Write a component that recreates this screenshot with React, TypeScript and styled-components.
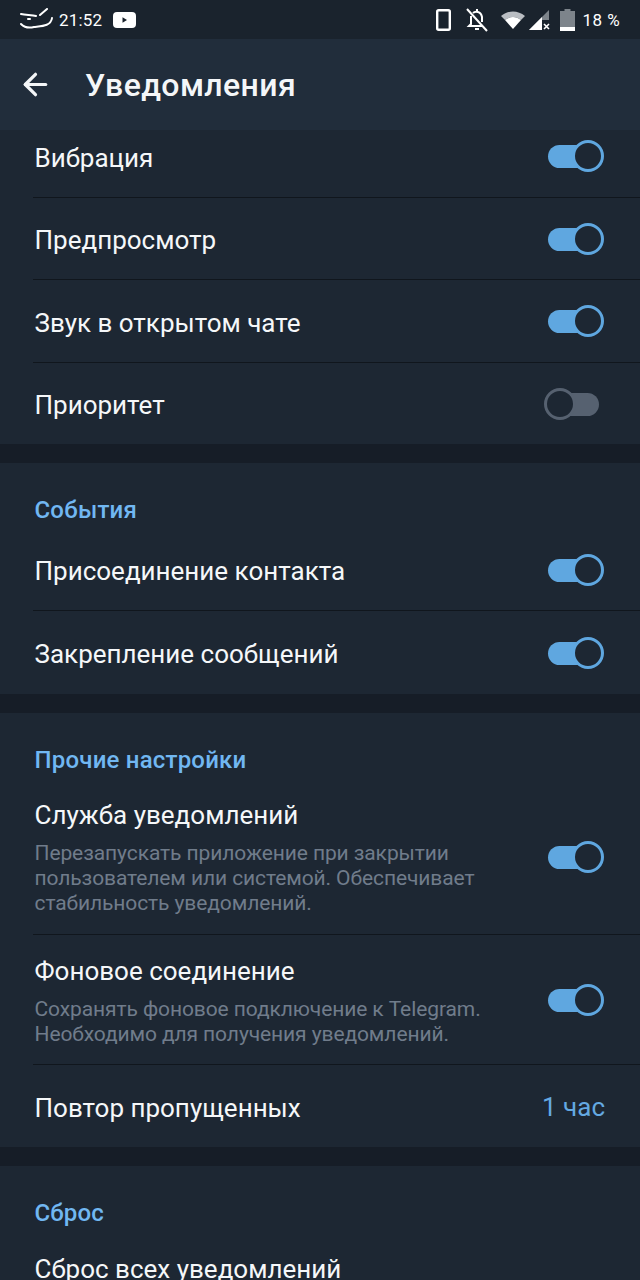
import React from 'react';
import styled, { createGlobalStyle } from 'styled-components';
import { ArrowLeft } from 'lucide-react';

const GlobalStyle = createGlobalStyle`
  html, body {
    margin: 0;
    padding: 0;
    background: #161d27;
    font-family: Roboto, "Noto Sans", sans-serif;
  }
`;

const Screen = styled.div`
  width: 640px;
  height: 1280px;
  overflow: hidden;
  background: #161d27;
  color: #ffffff;
`;

const StatusBar = styled.div`
  height: 39px;
  background: #1a232d;
  display: flex;
  align-items: center;
  justify-content: space-between;
  padding: 0 20px;
  box-sizing: border-box;
  font-size: 17px;
  position: relative;
  z-index: 2;
`;

const StatusGroup = styled.div`
  display: flex;
  align-items: center;
`;

const Toolbar = styled.div`
  height: 91px;
  background: #212d3b;
  display: flex;
  align-items: center;
  padding: 0 0 0 18px;
  box-sizing: border-box;
  position: relative;
  z-index: 2;
`;

const Title = styled.div`
  font-size: 32px;
  font-weight: 500;
  letter-spacing: 0.4px;
  margin-left: 32px;
  color: #f4f6f8;
`;

const Section = styled.div<{ $clip?: boolean }>`
  background: #1d2733;
  margin-bottom: 19px;
  margin-top: ${(p) => (p.$clip ? '-15px' : '0')};
  padding-top: ${(p) => (p.$clip ? '0' : '29px')};
`;

const SectionTitle = styled.div`
  font-size: 24px;
  font-weight: 500;
  letter-spacing: 0.2px;
  color: #71b7f2;
  padding: 0 34.5px;
  height: 37px;
  line-height: 37px;
`;

const Row = styled.div<{ $height: number; $divider?: boolean }>`
  height: ${(p) => p.$height}px;
  box-sizing: border-box;
  margin-left: 33px;
  padding: 0 35px 0 1.5px;
  display: flex;
  align-items: center;
  justify-content: space-between;
  border-bottom: ${(p) => (p.$divider ? '1px solid #10161d' : 'none')};
`;

const RowBody = styled.div`
  display: flex;
  flex-direction: column;
`;

const RowLabel = styled.div`
  font-size: 26px;
  padding-top: 3px;
  color: #f5f7f9;
`;

const RowHint = styled.div`
  font-size: 21px;
  line-height: 25px;
  letter-spacing: -0.1px;
  color: #707c8b;
  margin-top: 11px;
`;

const RowValue = styled.div`
  font-size: 26px;
  padding-top: 1px;
  color: #64a9e2;
`;

const SwitchBox = styled.div`
  width: 60px;
  height: 34px;
  flex: none;
  position: relative;
  margin-right: 1px;
`;

const SwitchTrack = styled.div<{ $on: boolean }>`
  position: absolute;
  left: ${(p) => (p.$on ? '4px' : '10px')};
  top: 6px;
  width: ${(p) => (p.$on ? '46px' : '45px')};
  height: 23px;
  border-radius: 12px;
  background: ${(p) => (p.$on ? '#5fa7e0' : '#566170')};
`;

const SwitchThumb = styled.div<{ $on: boolean }>`
  position: absolute;
  left: ${(p) => (p.$on ? '28px' : '0')};
  top: 1px;
  width: 32px;
  height: 32px;
  box-sizing: border-box;
  border-radius: 50%;
  border: 3px solid ${(p) => (p.$on ? '#5fa7e0' : '#566170')};
  background: #1d2733;
`;

const Toggle = ({ on }: { on: boolean }) => (
  <SwitchBox>
    <SwitchTrack $on={on} />
    <SwitchThumb $on={on} />
  </SwitchBox>
);

const Logo = () => (
  <svg width="34" height="24" viewBox="0 0 34 24" fill="none" stroke="#fff" strokeWidth="2" strokeLinecap="round">
    <path d="M1 6 C6 7 12 7 16 8" />
    <path d="M8 11 L10 11" />
    <path d="M1 16 C5 20 10 20 14 19 C22 18 31 18 32 10" />
    <path d="M27 1 L20 7" />
  </svg>
);

const YouTube = () => (
  <svg width="23" height="16" viewBox="0 0 23 16" style={{ marginLeft: 11 }}>
    <rect width="23" height="16" rx="4" fill="#fff" />
    <path d="M9.5 5.2 L14 8 L9.5 10.8 Z" fill="#1a232d" />
  </svg>
);

const Phone = () => (
  <svg width="15" height="22" viewBox="0 0 15 22" fill="none" stroke="#fff" strokeWidth="2.4">
    <rect x="1.2" y="1.2" width="12.6" height="19.6" rx="1.5" />
  </svg>
);

const BellOff = () => (
  <svg width="22" height="24" viewBox="0 0 22 24" fill="none" stroke="#fff" strokeWidth="2" style={{ marginLeft: 15 }}>
    <path d="M5 8 V16 L3 18 H17 M7 5 C9 3 15 3 16 9 V14" />
    <path d="M9 21 H13" />
    <path d="M11 1 V3" />
    <path d="M1 1 L21 23" />
  </svg>
);

const Wifi = () => (
  <svg width="24" height="18" viewBox="0 0 24 18" style={{ marginLeft: 13 }}>
    <path d="M0 5 C7 -1 17 -1 24 5 L20 9 C15 5 9 5 4 9 Z" fill="#b9bdc2" />
    <path d="M4 9 C9 5 15 5 20 9 L12 18 Z" fill="#fff" />
  </svg>
);

const Signal = () => (
  <svg width="21" height="20" viewBox="0 0 21 20" style={{ marginLeft: 4 }}>
    <path d="M0 20 L20 0 V10 H13 V20 Z" fill="#7d848b" />
    <path d="M0 20 L13 7 V20 Z" fill="#fff" />
    <path d="M15 14 L20 19 M20 14 L15 19" stroke="#fff" strokeWidth="1.6" />
  </svg>
);

const Battery = () => (
  <svg width="15" height="22" viewBox="0 0 15 22" style={{ marginLeft: 10 }}>
    <path d="M4.5 0 H10.5 V2 H15 V22 H0 V2 H4.5 Z" fill="#7d848b" />
    <rect y="18" width="15" height="4" fill="#fff" />
  </svg>
);

const BatteryText = styled.span`
  margin-left: 8px;
  font-size: 17px;
  letter-spacing: 0.4px;
`;

const Clock = styled.span`
  margin-left: 5px;
  letter-spacing: 0.2px;
`;

const App: React.FC = () => (
  <Screen>
    <GlobalStyle />
    <StatusBar>
      <StatusGroup>
        <Logo />
        <Clock>21:52</Clock>
        <YouTube />
      </StatusGroup>
      <StatusGroup>
        <Phone />
        <BellOff />
        <Wifi />
        <Signal />
        <Battery />
        <BatteryText>18 %</BatteryText>
      </StatusGroup>
    </StatusBar>
    <Toolbar>
      <ArrowLeft size={35} color="#f4f6f8" strokeWidth={2.2} />
      <Title>Уведомления</Title>
    </Toolbar>

    <Section $clip>
      <Row $height={83} $divider>
        <RowLabel>Вибрация</RowLabel>
        <Toggle on />
      </Row>
      <Row $height={82} $divider>
        <RowLabel>Предпросмотр</RowLabel>
        <Toggle on />
      </Row>
      <Row $height={83} $divider>
        <RowLabel>Звук в открытом чате</RowLabel>
        <Toggle on />
      </Row>
      <Row $height={81}>
        <RowLabel>Приоритет</RowLabel>
        <Toggle on={false} />
      </Row>
    </Section>

    <Section>
      <SectionTitle>События</SectionTitle>
      <Row $height={82} $divider>
        <RowLabel>Присоединение контакта</RowLabel>
        <Toggle on />
      </Row>
      <Row $height={83}>
        <RowLabel>Закрепление сообщений</RowLabel>
        <Toggle on />
      </Row>
    </Section>

    <Section>
      <SectionTitle>Прочие настройки</SectionTitle>
      <Row $height={156} $divider>
        <RowBody>
          <RowLabel>Служба уведомлений</RowLabel>
          <RowHint>
            Перезапускать приложение при закрытии
            <br />
            пользователем или системой. Обеспечивает
            <br />
            стабильность уведомлений.
          </RowHint>
        </RowBody>
        <Toggle on />
      </Row>
      <Row $height={130} $divider>
        <RowBody>
          <RowLabel>Фоновое соединение</RowLabel>
          <RowHint>
            Сохранять фоновое подключение к Telegram.
            <br />
            Необходимо для получения уведомлений.
          </RowHint>
        </RowBody>
        <Toggle on />
      </Row>
      <Row $height={82}>
        <RowLabel>Повтор пропущенных</RowLabel>
        <RowValue>1 час</RowValue>
      </Row>
    </Section>

    <Section>
      <SectionTitle>Сброс</SectionTitle>
      <Row $height={70}>
        <RowLabel>Сброс всех уведомлений</RowLabel>
      </Row>
    </Section>
  </Screen>
);

export default App;
